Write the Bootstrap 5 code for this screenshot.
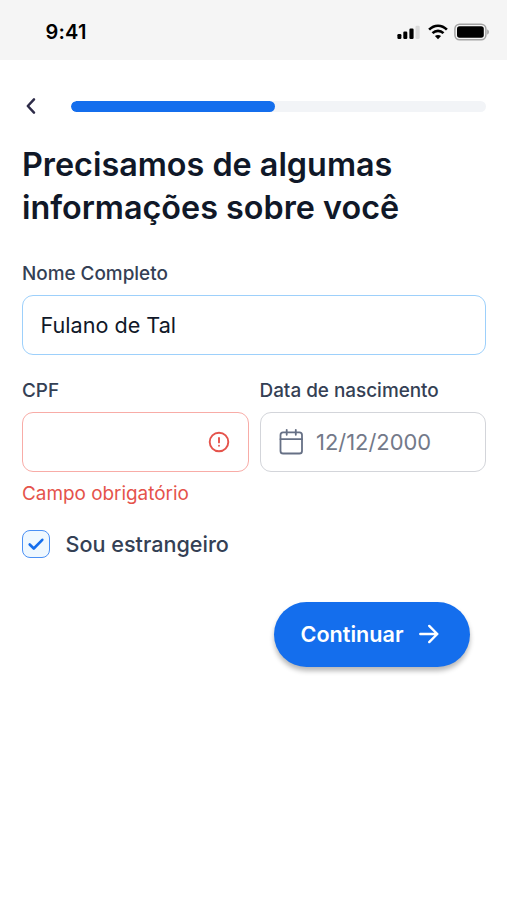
<!DOCTYPE html>
<html lang="pt-BR">
<head>
<meta charset="utf-8">
<meta name="viewport" content="width=device-width, initial-scale=1">
<title>Cadastro</title>
<link href="https://cdn.jsdelivr.net/npm/bootstrap@5.3.0/dist/css/bootstrap.min.css" rel="stylesheet">
<style>
body{font-family:Inter,"Liberation Sans",sans-serif;color:#101828;background:#fff;min-height:900px}
svg{display:block;flex:none}
.status-bar{height:60px;background:#f5f5f5;padding:3px 18px 0 45.5px}
.clock{font-size:20px;font-weight:600;color:#000;line-height:24px;letter-spacing:.2px}
.battery{margin-left:6px}
.screen{padding:0 21px 0 22px}
.step-row{height:22px;margin-top:35px}
.back-btn{width:48.5px;padding:0 0 0 2px;border:0;border-radius:0}
.step-progress{height:11px;border-radius:6px;background:#f2f4f7}
.step-progress .progress-bar{background:#146eed;border-radius:6px;width:49.1%}
.title{font-size:32.35px;line-height:43.3px;font-weight:600;margin:26px 0 30px}
.field-label{display:block;font-size:18.9px;line-height:27px;font-weight:500;color:#344054;margin:0 0 8px}
.field-box{height:60px;padding:0 17px 0 17.500px;border:1.4px solid #d3d5da;border-radius:11px;background:#fff}
.field-box input{font-size:21.6px;line-height:32px;padding:0;border:0;color:#101828;min-width:0;background:none;box-shadow:none!important}
.is-active{border-color:#9dd0fb}
.is-error{border-color:#f8aca7}
.field-box input.muted{color:#737989;font-size:21.900px;margin-left:10px}
.error-text{font-size:18.9px;line-height:27px;color:#e5534b;margin-top:8px}
.second-row{margin-top:22px}
.second-row .pe-1{padding-right:5.500px!important}
.second-row .ps-1{padding-left:5.500px!important}
.check-row{margin-top:21px}
.check-box{width:28px;height:28px;margin-left:-.5px;border:1.6px solid #4a90f5;border-radius:8px;background:#eff8ff}
.check-text{font-size:21.6px;line-height:32px;font-weight:500;color:#344054}
.action-row{margin-top:42px;padding-right:16.500px}
.go-btn{width:196px;height:65px;background:#146eed;color:#fff;font-size:21.6px;font-weight:600;box-shadow:0 4px 5px rgba(0,0,0,.28);padding:0 3px 0 0;border:0}
.go-btn:hover{background:#0f62d8;color:#fff}
</style>
</head>
<body>
<header class="status-bar d-flex align-items-center justify-content-between">
  <span class="clock">9:41</span>
  <div class="d-flex align-items-center">
    <svg width="24" height="18" viewBox="0 0 24 18"><rect x="1.400" y="11" width="4" height="5" rx="1.2"/><rect x="7.300" y="8.5" width="4" height="7.5" rx="1.2"/><rect x="13.400" y="5.5" width="4.2" height="10.5" rx="1.2"/><rect x="19.500" y="2.7" width="4.2" height="13.3" rx="1.2" fill="#dadada"/></svg>
    <svg class="ms-2" width="20" height="18" viewBox="0 0 20 18" fill="none" stroke="#000" stroke-width="2.6"><path d="M1.1 6.7C6.3 1.5 13.700 1.500 18.900 6.700"/><path d="M4.500 10.100C7.700 7.100 12.300 7.100 15.500 10.100"/><path d="M10 16.200 6.900 13C8.700 11.500 11.300 11.500 13.100 13Z" fill="#000" stroke="none"/></svg>
    <svg class="battery" width="35" height="18" viewBox="0 0 35 18"><rect x=".9" y="1.200" width="31" height="15.600" rx="4.800" fill="#f5f5f5" stroke="#a3a3a3" stroke-width="1.500"/><rect x="3" y="3.300" width="26.800" height="11.400" rx="2.600"/><path d="M33.200 6.300q1.800 1 1.800 2.700t-1.800 2.700z" fill="#a3a3a3"/></svg>
  </div>
</header>
<main class="screen">
  <div class="step-row d-flex align-items-center">
    <button class="btn back-btn d-flex" aria-label="Voltar"><svg width="14" height="20" viewBox="0 0 14 20" fill="none" stroke="#2d2b48" stroke-width="2.500" stroke-linecap="round" stroke-linejoin="round"><path d="M10 3.300 3.800 10l6.200 6.700"/></svg></button>
    <div class="progress step-progress flex-grow-1"><div class="progress-bar"></div></div>
  </div>
  <h1 class="title">Precisamos de algumas<br>informações sobre você</h1>
  <form>
    <div>
      <label class="field-label" for="nome">Nome Completo</label>
      <div class="field-box is-active d-flex align-items-center"><input id="nome" class="form-control" value="Fulano de Tal"></div>
    </div>
    <div class="row g-0 second-row">
      <div class="col pe-1">
        <label class="field-label" for="cpf">CPF</label>
        <div class="field-box is-error d-flex align-items-center">
          <input id="cpf" class="form-control">
          <svg width="24" height="24" viewBox="0 0 24 24" fill="none" stroke="#e5534b" stroke-width="1.900" stroke-linecap="round"><circle cx="12" cy="12" r="9.300"/><path d="M12 8v4.400M12 15.700v.1"/></svg>
        </div>
        <div class="error-text">Campo obrigatório</div>
      </div>
      <div class="col ps-1">
        <label class="field-label" for="data">Data de nascimento</label>
        <div class="field-box d-flex align-items-center">
          <svg width="28" height="30" viewBox="1.500 0 28 30" fill="none" stroke="#667085" stroke-width="1.800" stroke-linecap="round" stroke-linejoin="round"><rect x="4" y="5.300" width="21.500" height="21.200" rx="2.600"/><path d="M4 12.200h21.500M10.200 2.800v5M19.300 2.800v5"/></svg>
          <input id="data" class="form-control muted" value="12/12/2000">
        </div>
      </div>
    </div>
    <label class="check-row d-flex align-items-center gap-3">
      <span class="check-box d-flex align-items-center justify-content-center"><svg width="18" height="18" viewBox="0 0 18 18" fill="none" stroke="#146eed" stroke-width="2.600" stroke-linecap="round" stroke-linejoin="round"><path d="M2.700 9.500 6.800 13.500 15.300 4.800"/></svg></span>
      <span class="check-text">Sou estrangeiro</span>
    </label>
    <div class="d-flex justify-content-end action-row">
      <button type="button" class="btn go-btn rounded-pill d-flex align-items-center justify-content-center">Continuar
        <svg class="ms-3" width="20" height="20" viewBox="0 0 20 20" fill="none" stroke="#fff" stroke-width="2.400" stroke-linecap="round" stroke-linejoin="round"><path d="M1.300 10h17M10.200 1.900 18.300 10l-8.100 8.100"/></svg>
      </button>
    </div>
  </form>
</main>
<script src="https://cdn.jsdelivr.net/npm/bootstrap@5.3.0/dist/js/bootstrap.bundle.min.js"></script>
</body>
</html>
